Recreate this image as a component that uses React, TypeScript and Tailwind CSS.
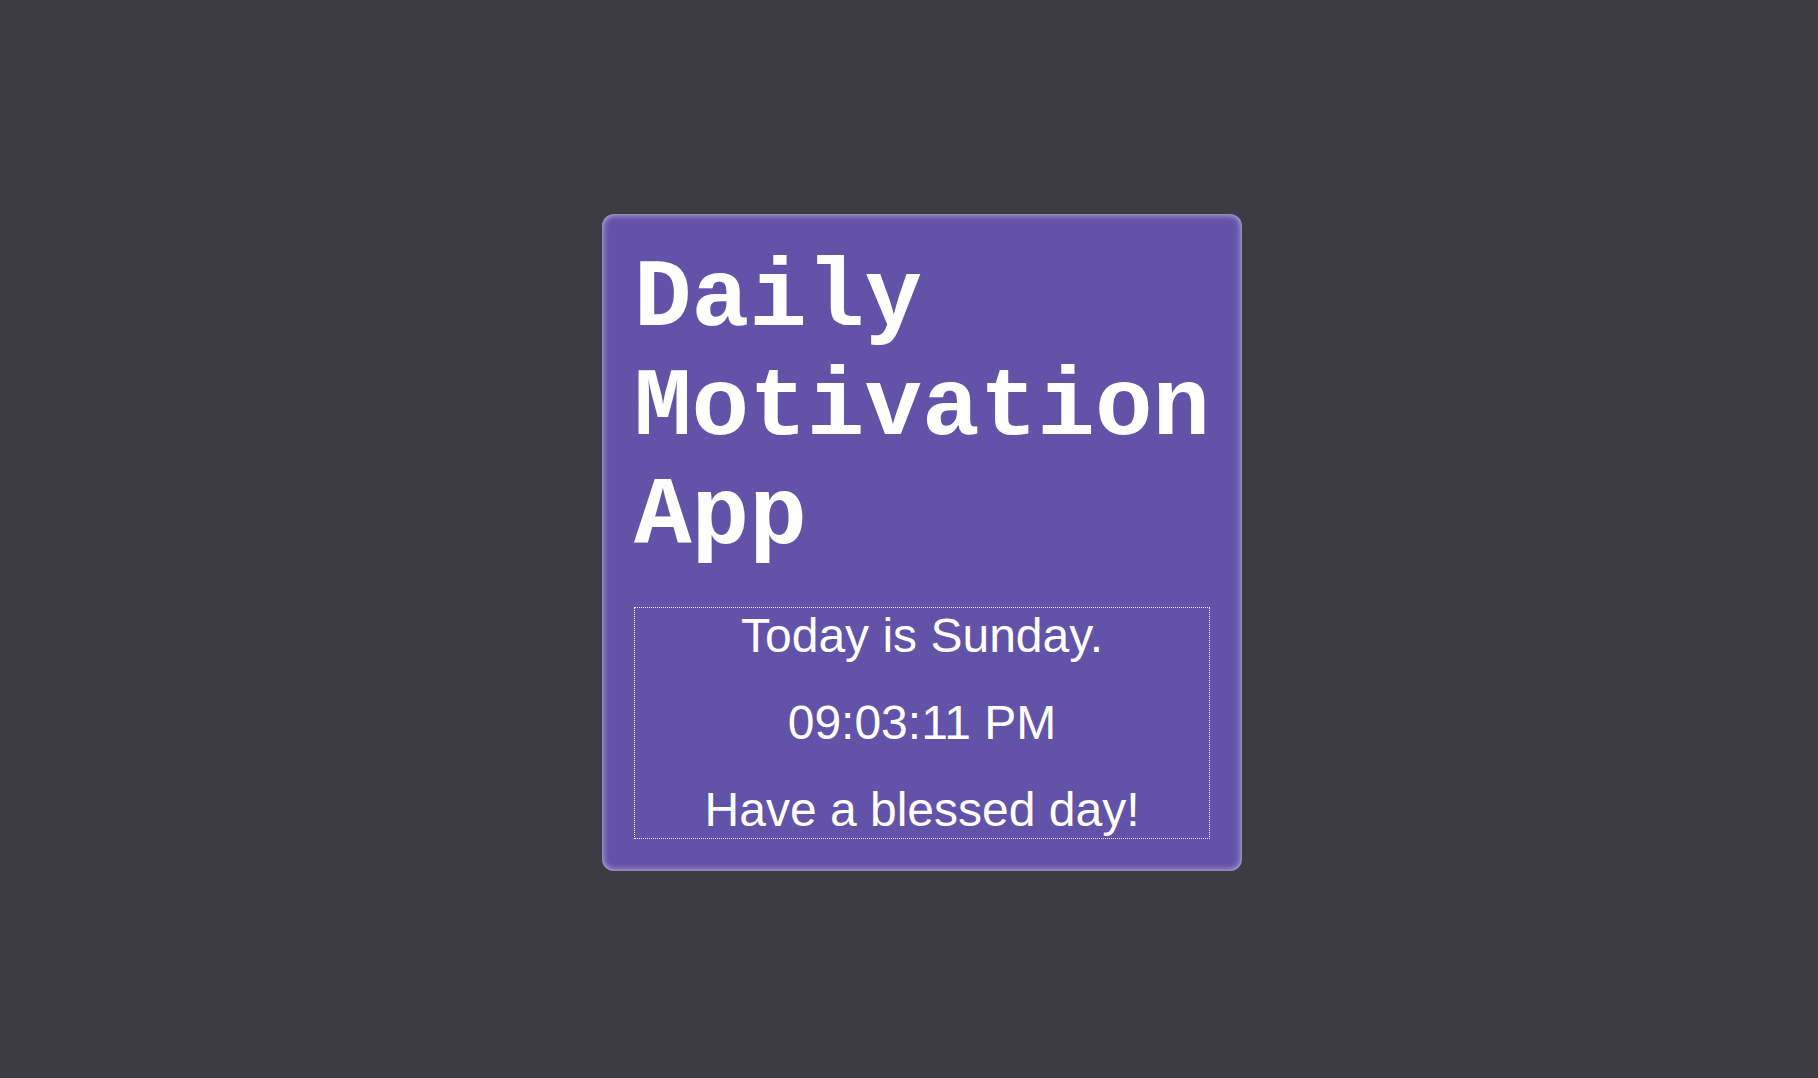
import React from "react";

export default function App() {
  return (
    <div className="min-h-screen w-full bg-[#3d3c42] flex items-center justify-center pl-[26px] pt-[7px]">
      <div className="w-[640px] rounded-[12px] bg-[#6252a8] p-8 shadow-[inset_0_0_7px_rgba(255,255,255,0.7)] flex flex-col gap-[34px]">
        <h1 className="m-0 text-white font-bold text-[96px] leading-[1.133] [font-family:'Liberation_Mono','Courier_New',monospace]">
          Daily Motivation App
        </h1>
        <div className="border border-dotted border-white h-[232px] flex flex-col items-center gap-[32px] text-white text-[48px] leading-[1.149] [font-family:'Liberation_Sans',Arial,sans-serif]">
          <p className="m-0">Today is Sunday.</p>
          <p className="m-0">09:03:11 PM</p>
          <p className="m-0">Have a blessed day!</p>
        </div>
      </div>
    </div>
  );
}
